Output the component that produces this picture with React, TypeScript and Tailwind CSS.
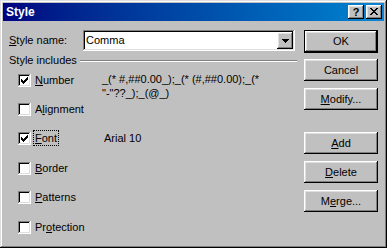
import React from 'react';

const raised =
  'shadow-[inset_-1px_-1px_0_#000,inset_1px_1px_0_#fff,inset_-2px_-2px_0_#808080,inset_2px_2px_0_#dfdfdf]';
const sunken =
  'shadow-[inset_-1px_-1px_0_#fff,inset_1px_1px_0_#808080,inset_-2px_-2px_0_#dfdfdf,inset_2px_2px_0_#000]';

// classic 7x7 check glyph, one column at a time
const checkCols = [2, 3, 4, 3, 2, 1, 0];

function CheckBox({ checked }: { checked?: boolean }) {
  return (
    <div className={`relative w-[13px] h-[13px] bg-white flex-shrink-0 ${sunken}`}>
      {checked && (
        <svg className="absolute left-[3px] top-[3px]" width="7" height="7" shapeRendering="crispEdges">
          {checkCols.map((y, x) => (
            <rect key={x} x={x} y={y} width="1" height="3" fill="#000" />
          ))}
        </svg>
      )}
    </div>
  );
}

function Btn({ children, isDefault, className = '' }: { children: React.ReactNode; isDefault?: boolean; className?: string }) {
  if (isDefault) {
    return (
      <div className={`w-[74px] h-[23px] border border-black flex ${className}`}>
        <div className={`flex-1 flex items-center justify-center ${raised}`}>{children}</div>
      </div>
    );
  }
  return (
    <div className={`w-[74px] h-[22px] flex items-center justify-center ${raised} ${className}`}>{children}</div>
  );
}

function Row({ label, checked, focus, className = '', children }: {
  label: React.ReactNode; checked?: boolean; focus?: boolean; className?: string; children?: React.ReactNode;
}) {
  return (
    <div className={`h-[13px] flex items-center pl-[9px] ${className}`}>
      <CheckBox checked={checked} />
      <div className="w-[71px] pl-[4px] relative">
        <span className={focus ? 'outline outline-1 outline-dotted outline-black outline-offset-[1px]' : ''}>{label}</span>
      </div>
      {children}
    </div>
  );
}

export default function App() {
  return (
    <div className="w-[387px] h-[248px] bg-[#c0c0c0] p-[3px] text-black text-[11px] leading-[13px] font-['Liberation_Sans',Arial,sans-serif] shadow-[inset_-1px_-1px_0_#000,inset_1px_1px_0_#dfdfdf,inset_-2px_-2px_0_#808080,inset_2px_2px_0_#fff]">
      {/* Title bar */}
      <div className="h-[18px] flex items-center pl-[3px] pr-[2px] bg-gradient-to-r from-[#000080] to-[#1084d0]">
        <span className="text-white font-bold text-[12px]">Style</span>
        <div className="ml-auto flex gap-[2px]">
          <div className={`w-[16px] h-[14px] bg-[#c0c0c0] flex items-center justify-center font-bold text-[11px] leading-none ${raised}`}>?</div>
          <div className={`w-[16px] h-[14px] bg-[#c0c0c0] flex items-center justify-center ${raised}`}>
            <svg width="8" height="7" shapeRendering="crispEdges" className="-mt-[1px]">
              <path d="M0 0h2v1H0zM6 0h2v1H6zM1 1h2v1H1zM5 1h2v1H5zM2 2h4v1H2zM3 3h2v1H3zM2 4h4v1H2zM1 5h2v1H1zM5 5h2v1H5zM0 6h2v1H0zM6 6h2v1H6z" fill="#000" />
            </svg>
          </div>
        </div>
      </div>

      {/* Body */}
      <div className="flex pl-[6px] pt-[9px] gap-[7px]">
        <div className="w-[288px]">
          <div className="h-[21px] flex items-center">
            <span className="w-[74px]"><span className="underline">S</span>tyle name:</span>
            <div className={`w-[212px] h-[21px] bg-white flex items-center p-[2px] ${sunken}`}>
              <span className="flex-1 pl-[1px]">Comma</span>
              <div className={`w-[16px] h-[17px] bg-[#c0c0c0] flex items-center justify-center ${raised}`}>
                <svg width="7" height="4" shapeRendering="crispEdges">
                  <path d="M0 0h7v1H0zM1 1h5v1H1zM2 2h3v1H2zM3 3h1v1H3z" fill="#000" />
                </svg>
              </div>
            </div>
          </div>

          <div className="mt-[3px] h-[13px] flex items-center gap-[3px]">
            <span>Style includes</span>
            <div className="flex-1 border-t border-b border-t-[#808080] border-b-white" />
          </div>

          <Row className="mt-[7px]" checked label={<><span className="underline">N</span>umber</>}>
            <div className="mt-[-2px] self-start leading-[14px] whitespace-nowrap">
              _(* #,##0.00_);_(* (#,##0.00);_(*
              <br />
              "-"??_);_(@_)
            </div>
          </Row>
          <Row className="mt-[16px]" label={<>A<span className="underline">l</span>ignment</>} />
          <Row className="mt-[16px]" checked focus label={<><span className="underline">F</span>ont</>}>
            <span className="ml-[2px]">Arial 10</span>
          </Row>
          <Row className="mt-[17px]" label={<><span className="underline">B</span>order</>} />
          <Row className="mt-[16px]" label={<><span className="underline">P</span>atterns</>} />
          <Row className="mt-[17px]" label={<>Pr<span className="underline">o</span>tection</>} />
        </div>

        <div className="flex flex-col">
          <Btn isDefault>OK</Btn>
          <Btn className="mt-[6px]">Cancel</Btn>
          <Btn className="mt-[7px]"><span><span className="underline">M</span>odify...</span></Btn>
          <Btn className="mt-[22px]"><span><span className="underline">A</span>dd</span></Btn>
          <Btn className="mt-[7px]"><span><span className="underline">D</span>elete</span></Btn>
          <Btn className="mt-[7px]"><span>M<span className="underline">e</span>rge...</span></Btn>
        </div>
      </div>
    </div>
  );
}
